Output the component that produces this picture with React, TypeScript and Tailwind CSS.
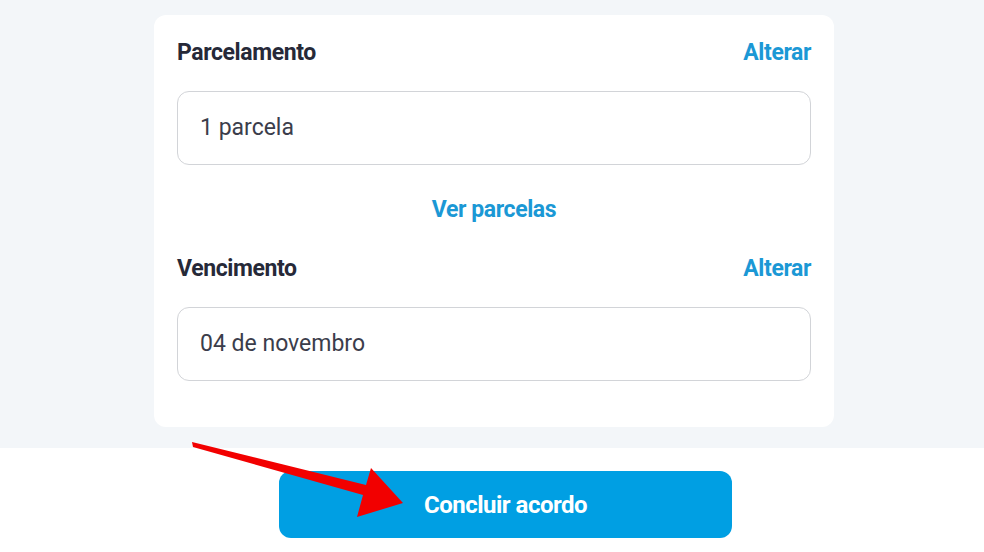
import React from "react";

function Field({ label, value }: { label: string; value: string }) {
  return (
    <div>
      <div className="flex h-[24px] items-center justify-between">
        <span className="text-[23px] font-bold tracking-[-0.4px] text-[#262938]">{label}</span>
        <button className="text-[23px] font-bold tracking-[-0.4px] text-[#1b98d5]">Alterar</button>
      </div>
      <div className="mt-[26px] flex h-[74px] items-center rounded-[12px] border border-[#d2d4d8] px-[22px]">
        <span className="text-[23px] text-[#3b3d4b]">{value}</span>
      </div>
    </div>
  );
}

function RedArrow() {
  return (
    <svg className="pointer-events-none absolute left-0 top-0" width="984" height="552" viewBox="0 0 984 552">
      <polygon
        points="192,442 193,447 363,495 357,517 403,503 371,468 366,485"
        fill="#f20000"
      />
    </svg>
  );
}

export default function App() {
  return (
    <div
      className="relative h-[552px] w-[984px] overflow-hidden bg-white"
      style={{ fontFamily: "Roboto, 'Liberation Sans', sans-serif" }}
    >
      <div className="bg-[#f3f6f9] pb-[21px] pt-[15px]">
        <div className="ml-[154px] w-[680px] rounded-[12px] bg-white px-[23px] pb-[46px] pt-[26px]">
          <Field label="Parcelamento" value="1 parcela" />
          <div className="mt-[33px] flex h-[24px] items-center justify-center">
            <button className="text-[23px] font-bold tracking-[-0.4px] text-[#1b98d5]">Ver parcelas</button>
          </div>
          <div className="mt-[35px]">
            <Field label="Vencimento" value="04 de novembro" />
          </div>
        </div>
      </div>
      <button className="ml-[279px] mt-[23px] flex h-[67px] w-[453px] items-center justify-center rounded-[12px] bg-[#009fe3] text-[24px] font-bold tracking-[-0.5px] text-white">
        Concluir acordo
      </button>
      <RedArrow />
    </div>
  );
}
